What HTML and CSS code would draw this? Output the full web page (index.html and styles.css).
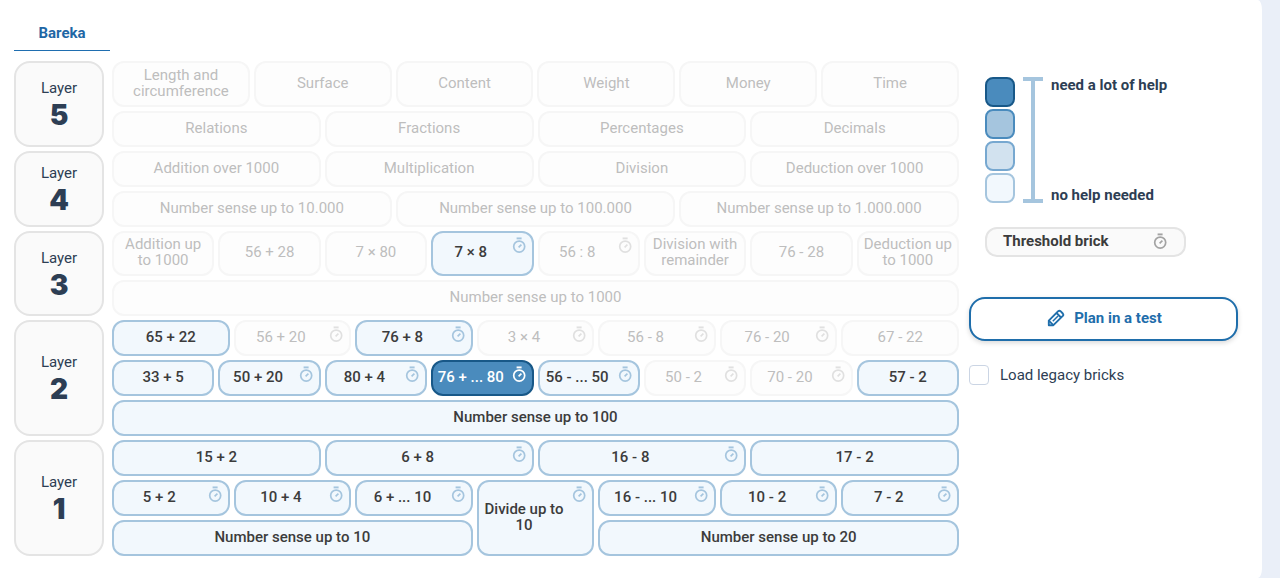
FILE: index.html
```
<!DOCTYPE html>
<html lang="en">
<head>
  <meta charset="UTF-8">
  <meta name="viewport" content="width=device-width, initial-scale=1.0">
  <title>Bareka</title>
  <link rel="stylesheet" href="styles.css">
</head>
<body>
  <svg class="sprite" aria-hidden="true">
    <symbol id="timer" viewBox="0 0 14 16">
      <path d="M4.6 1.400h5" fill="none" stroke="currentColor" stroke-width="1.900"/>
      <circle cx="7.200" cy="9.600" r="5.500" fill="none" stroke="currentColor" stroke-width="1.700"/>
      <path d="M6.6 10.300L9.400 7.600" fill="none" stroke="currentColor" stroke-width="1.7"/>
    </symbol>
    <symbol id="pencil" viewBox="0 0 18 18">
      <g fill="none" stroke="currentColor" stroke-width="1.900" stroke-linejoin="round">
        <path d="M1.800 16.200v-4.600L11.200 2.200q1.200-1 2.300 0l2.300 2.300q1 1.200 0 2.300L6.400 16.200z"/>
        <path d="M9.500 4l4.500 4.500M1.800 11.600l4.600 4.600"/>
        <path d="M5.800 12.200L11 7" stroke-width="1.500"/>
      </g>
    </symbol>
  </svg>

  <div class="card">
    <nav class="tabs">
      <a class="tab" href="#bareka">Bareka</a>
    </nav>

    <div class="content">
      <main class="wall" id="bareka">
        <section class="layer">
          <h2 class="layer-label">Layer <span>5</span></h2>
          <div class="rows">
            <div class="row cols-6 tall">
              <button class="brick" disabled>Length and circumference</button>
              <button class="brick" disabled>Surface</button>
              <button class="brick" disabled>Content</button>
              <button class="brick" disabled>Weight</button>
              <button class="brick" disabled>Money</button>
              <button class="brick" disabled>Time</button>
            </div>
            <div class="row cols-4">
              <button class="brick" disabled>Relations</button>
              <button class="brick" disabled>Fractions</button>
              <button class="brick" disabled>Percentages</button>
              <button class="brick" disabled>Decimals</button>
            </div>
          </div>
        </section>

        <section class="layer">
          <h2 class="layer-label">Layer <span>4</span></h2>
          <div class="rows">
            <div class="row cols-4">
              <button class="brick" disabled>Addition over 1000</button>
              <button class="brick" disabled>Multiplication</button>
              <button class="brick" disabled>Division</button>
              <button class="brick" disabled>Deduction over 1000</button>
            </div>
            <div class="row cols-3">
              <button class="brick" disabled>Number sense up to 10.000</button>
              <button class="brick" disabled>Number sense up to 100.000</button>
              <button class="brick" disabled>Number sense up to 1.000.000</button>
            </div>
          </div>
        </section>

        <section class="layer">
          <h2 class="layer-label">Layer <span>3</span></h2>
          <div class="rows">
            <div class="row cols-8">
              <button class="brick" disabled>Addition up to 1000</button>
              <button class="brick" disabled>56 + 28</button>
              <button class="brick" disabled>7 × 80</button>
              <button class="brick level-1 timed">7 × 8 <svg class="timer"><use href="#timer"/></svg></button>
              <button class="brick timed" disabled>56 : 8 <svg class="timer"><use href="#timer"/></svg></button>
              <button class="brick" disabled>Division with remainder</button>
              <button class="brick" disabled>76 - 28</button>
              <button class="brick" disabled>Deduction up to 1000</button>
            </div>
            <div class="row">
              <button class="brick" disabled>Number sense up to 1000</button>
            </div>
          </div>
        </section>

        <section class="layer">
          <h2 class="layer-label">Layer <span>2</span></h2>
          <div class="rows">
            <div class="row cols-7">
              <button class="brick level-1">65 + 22</button>
              <button class="brick timed" disabled>56 + 20 <svg class="timer"><use href="#timer"/></svg></button>
              <button class="brick level-1 timed">76 + 8 <svg class="timer"><use href="#timer"/></svg></button>
              <button class="brick timed" disabled>3 × 4 <svg class="timer"><use href="#timer"/></svg></button>
              <button class="brick timed" disabled>56 - 8 <svg class="timer"><use href="#timer"/></svg></button>
              <button class="brick timed" disabled>76 - 20 <svg class="timer"><use href="#timer"/></svg></button>
              <button class="brick" disabled>67 - 22</button>
            </div>
            <div class="row cols-8">
              <button class="brick level-1">33 + 5</button>
              <button class="brick level-1 timed">50 + 20 <svg class="timer"><use href="#timer"/></svg></button>
              <button class="brick level-1 timed">80 + 4 <svg class="timer"><use href="#timer"/></svg></button>
              <button class="brick level-4 timed">76 + ... 80 <svg class="timer"><use href="#timer"/></svg></button>
              <button class="brick level-1 timed">56 - ... 50 <svg class="timer"><use href="#timer"/></svg></button>
              <button class="brick timed" disabled>50 - 2 <svg class="timer"><use href="#timer"/></svg></button>
              <button class="brick timed" disabled>70 - 20 <svg class="timer"><use href="#timer"/></svg></button>
              <button class="brick level-1">57 - 2</button>
            </div>
            <div class="row">
              <button class="brick level-1">Number sense up to 100</button>
            </div>
          </div>
        </section>

        <section class="layer">
          <h2 class="layer-label">Layer <span>1</span></h2>
          <div class="rows">
            <div class="row cols-4">
              <button class="brick level-1">15 + 2</button>
              <button class="brick level-1 timed">6 + 8 <svg class="timer"><use href="#timer"/></svg></button>
              <button class="brick level-1 timed">16 - 8 <svg class="timer"><use href="#timer"/></svg></button>
              <button class="brick level-1">17 - 2</button>
            </div>
            <div class="row cols-7">
              <button class="brick level-1 timed">5 + 2 <svg class="timer"><use href="#timer"/></svg></button>
              <button class="brick level-1 timed">10 + 4 <svg class="timer"><use href="#timer"/></svg></button>
              <button class="brick level-1 timed">6 + ... 10 <svg class="timer"><use href="#timer"/></svg></button>
              <button class="brick level-1 timed two-rows">Divide up to 10 <svg class="timer"><use href="#timer"/></svg></button>
              <button class="brick level-1 timed">16 - ... 10 <svg class="timer"><use href="#timer"/></svg></button>
              <button class="brick level-1 timed">10 - 2 <svg class="timer"><use href="#timer"/></svg></button>
              <button class="brick level-1 timed">7 - 2 <svg class="timer"><use href="#timer"/></svg></button>
              <button class="brick level-1 three-cols">Number sense up to 10</button>
              <button class="brick level-1 three-cols">Number sense up to 20</button>
            </div>
          </div>
        </section>
      </main>

      <aside class="side">
        <div class="legend">
          <div class="swatches">
            <span class="swatch level-4"></span>
            <span class="swatch level-3"></span>
            <span class="swatch level-2"></span>
            <span class="swatch level-1"></span>
          </div>
          <div class="range"></div>
          <div class="range-labels">
            <span>need a lot of help</span>
            <span>no help needed</span>
          </div>
        </div>

        <div class="threshold">Threshold brick <svg class="threshold-icon"><use href="#timer"/></svg></div>

        <button class="plan-button"><svg class="pencil"><use href="#pencil"/></svg>Plan in a test</button>

        <label class="legacy"><input type="checkbox"> Load legacy bricks</label>
      </aside>
    </div>
  </div>
</body>
</html>
```
FILE: styles.css
```
* {
  box-sizing: border-box;
}

body {
  margin: 0;
  background: #eaeff8;
  color: #2d3e54;
  font-family: Roboto, "Liberation Sans", sans-serif;
  font-size: 15px;
  font-weight: 400;
  line-height: 16px;
}

button {
  font: inherit;
  cursor: pointer;
}

.sprite {
  display: none;
}

.card {
  min-height: 100vh;
  margin-right: 18px;
  padding: 16px 24px 22px 14px;
  background: #fff;
  border-radius: 0 4px 4px 0 / 0 10px 10px 0;
}

.tabs {
  display: flex;
  margin-bottom: 10px;
}

.tab {
  width: 96px;
  padding: 9px 0;
  border-bottom: 1px solid #1f6eb0;
  color: #1f67a5;
  font-weight: 700;
  text-align: center;
  text-decoration: none;
}

.content {
  display: flex;
  gap: 10px;
}

.wall {
  display: flex;
  flex: 1;
  flex-direction: column;
  gap: 4px;
}

.layer {
  display: flex;
  gap: 8px;
}

.layer-label {
  display: flex;
  flex: 0 0 90px;
  flex-direction: column;
  align-items: center;
  justify-content: center;
  gap: 3px;
  margin: 0;
  padding-top: 3px;
  background: #fafafa;
  border: 2px solid #e4e4e4;
  border-radius: 16px;
  font-size: 15px;
  font-weight: 400;
}

.layer-label span {
  font-family: Inter, "Liberation Sans", sans-serif;
  font-size: 28px;
  font-weight: 900;
  line-height: 32px;
}

.rows {
  display: grid;
  flex: 1;
  gap: 4px;
}

.row {
  display: grid;
  grid-auto-rows: minmax(36px, auto);
  gap: 4px;
}

.tall {
  grid-auto-rows: minmax(46px, auto);
}

.cols-3 { grid-template-columns: repeat(3, minmax(0, 1fr)); }
.cols-4 { grid-template-columns: repeat(4, minmax(0, 1fr)); }
.cols-6 { grid-template-columns: repeat(6, minmax(0, 1fr)); }
.cols-7 { grid-template-columns: repeat(7, minmax(0, 1fr)); }
.cols-8 { grid-template-columns: repeat(8, minmax(0, 1fr)); }

.three-cols { grid-column: span 3; }
.two-rows { grid-row: span 2; }

.brick {
  position: relative;
  padding: 3px 4px 6px;
  background: #fafafa;
  border: 2px solid #e4e4e4;
  border-radius: 12px;
  color: #3c3c3c;
  font-weight: 500;
}

.brick:disabled {
  background: #fdfdfd;
  border-color: #f6f6f6;
  color: #bebebe;
  font-weight: 400;
  cursor: default;
}

.timed {
  padding-right: 27px;
}

.timer {
  position: absolute;
  top: 4px;
  right: 6px;
  width: 14px;
  height: 16px;
  color: #a5c5de;
}

.brick:disabled .timer {
  color: #e0e0e0;
}

.level-1 {
  background: #f2f8fd;
  border-color: #a5c5de;
}

.level-2 {
  background: #d2e2ef;
  border-color: #77a8d0;
}

.level-3 {
  background: #a5c5de;
  border-color: #4a8bbd;
}

.level-4 {
  background: #4a8bbd;
  border-color: #185888;
  color: #fff;
}

.level-4 .timer {
  color: #fff;
}

.side {
  flex: 0 0 269px;
  padding-top: 16px;
}

.legend {
  display: flex;
  gap: 8px;
  margin-left: 16px;
  font-weight: 700;
}

.swatches {
  display: grid;
  gap: 2px;
}

.swatch {
  width: 30px;
  height: 30px;
  border-width: 2px;
  border-style: solid;
  border-radius: 8px;
}

.range {
  width: 20px;
  border: solid #a5c5de;
  border-width: 4px 0;
  background: linear-gradient(#a5c5de, #a5c5de) center / 4px 100% no-repeat;
}

.range-labels {
  display: flex;
  flex-direction: column;
  justify-content: space-between;
}

.threshold {
  display: flex;
  align-items: center;
  justify-content: space-between;
  width: 201px;
  height: 30px;
  margin: 24px 0 40px 16px;
  padding: 0 17px 2px 16px;
  background: #fafafa;
  border: 2px solid #e4e4e4;
  border-radius: 12px;
  color: #3c3c3c;
  font-weight: 700;
}

.threshold-icon {
  width: 14px;
  height: 16px;
  color: #a3a3a3;
}

.plan-button {
  display: flex;
  align-items: center;
  justify-content: center;
  gap: 9px;
  width: 100%;
  height: 44px;
  padding: 0 4px 2px 6px;
  background: #fff;
  border: 2px solid #1f6eab;
  border-radius: 16px;
  box-shadow: 0 2px 5px rgba(0, 0, 0, 0.15);
  color: #1f6eab;
  font-weight: 700;
}

.pencil {
  width: 18px;
  height: 18px;
}

.legacy {
  display: flex;
  align-items: center;
  gap: 11px;
  margin-top: 24px;
}

.legacy input {
  width: 20px;
  height: 20px;
  margin: 0;
  appearance: none;
  background: #fff;
  border: 1px solid #cbd5e4;
  border-radius: 4px;
}
```
